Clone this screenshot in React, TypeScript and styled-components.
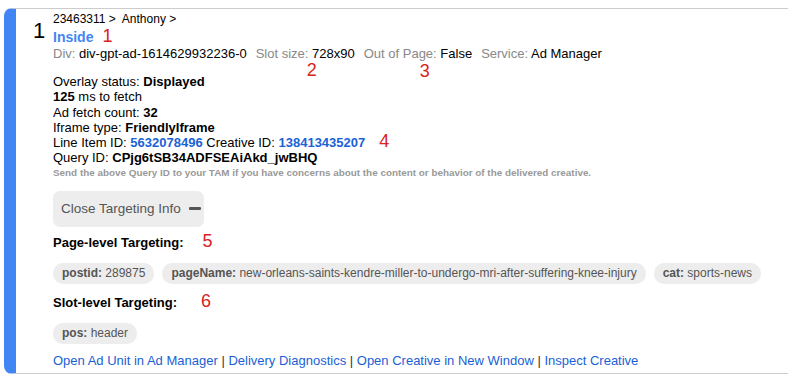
import styled, { createGlobalStyle } from 'styled-components';

const GlobalStyle = createGlobalStyle`
  body {
    margin: 0;
    background: #fff;
    font-family: "Liberation Sans", Arial, sans-serif;
    color: #000;
  }
`;

const Card = styled.div`
  margin: 8px 0 0 4px;
  display: flex;
  border-top: 1px solid #ccc;
  border-bottom: 1px solid #ccc;
  border-left: 12px solid #4285f4;
  border-radius: 8px 0 0 8px;
  height: 366px;
  box-sizing: border-box;
  padding: 4px 0 0 17px;
`;

const Index = styled.div`
  font-size: 22px;
  line-height: 24px;
  padding-top: 6px;
  width: 20px;
`;

const Body = styled.div`
  display: flex;
  flex-direction: column;
  font-size: 13px;
  line-height: 15.3px;
`;

const Crumbs = styled.div`
  font-size: 12px;
  line-height: 13px;
`;

const SlotName = styled.div`
  font-size: 14px;
  font-weight: bold;
  color: #4285f4;
  line-height: 18px;
  margin-top: 2px;
`;

const MetaRow = styled.div`
  display: flex;
  gap: 9px;
  line-height: 15.5px;
  margin-bottom: 12.5px;
`;

const Meta = styled.span`
  position: relative;
`;

const Label = styled.span`
  color: #888;
`;

const Mark = styled.span<{ $top?: number; $left?: number }>`
  color: #d9231c;
  font-size: 18px;
  font-weight: normal;
  line-height: 0;
  position: ${({ $top }) => ($top !== undefined ? 'absolute' : 'static')};
  top: ${({ $top }) => ($top ?? 0) + 8}px;
  left: ${({ $left }) => $left ?? 0}px;
  margin-left: ${({ $top }) => ($top !== undefined ? 0 : 9)}px;
`;

const Blue = styled.b`
  color: #1a62d6;
`;

const Note = styled.div`
  font-size: 9.9px;
  font-weight: bold;
  color: #999;
  line-height: 14px;
`;

const ToggleButton = styled.button`
  margin-top: 11px;
  width: 151px;
  height: 36px;
  border: none;
  border-radius: 7px;
  background: #ededed;
  color: #555;
  font-family: inherit;
  font-size: 13.5px;
  white-space: nowrap;
  display: flex;
  align-items: center;
  justify-content: flex-start;
  gap: 8px;
  padding: 0 8px;
`;

const Minus = styled.span`
  flex-shrink: 0;
  width: 12px;
  height: 3px;
  background: #555;
  border-radius: 1px;
`;

const Heading = styled.div<{ $gap: number }>`
  font-size: 13px;
  font-weight: bold;
  margin-top: ${({ $gap }) => $gap}px;
  line-height: 16px;
`;

const Chips = styled.div`
  display: flex;
  gap: 8px;
  margin-top: 12px;
`;

const Chip = styled.span`
  background: #ededed;
  border-radius: 10px;
  height: 21px;
  line-height: 21px;
  padding: 0 9px;
  font-size: 12px;
  color: #555;
  white-space: nowrap;
`;

const Links = styled.div`
  margin-top: 9px;
  font-size: 13px;
  color: #333;
  a {
    color: #1a5fd6;
    text-decoration: none;
  }
`;

export default function App() {
  return (
    <>
      <GlobalStyle />
      <Card>
        <Index>1</Index>
        <Body>
          <Crumbs>23463311 &gt;&nbsp; Anthony &gt;</Crumbs>
          <SlotName>
            Inside<Mark>1</Mark>
          </SlotName>
          <MetaRow>
            <Meta>
              <Label>Div:</Label> div-gpt-ad-1614629932236-0
            </Meta>
            <Meta>
              <Label>Slot size:</Label> 728x90
              <Mark $top={16} $left={51}>2</Mark>
            </Meta>
            <Meta>
              <Label>Out of Page:</Label> False
              <Mark $top={17} $left={56}>3</Mark>
            </Meta>
            <Meta>
              <Label>Service:</Label> Ad Manager
            </Meta>
          </MetaRow>
          <div>
            Overlay status: <b>Displayed</b>
          </div>
          <div>
            <b>125</b> ms to fetch
          </div>
          <div>
            Ad fetch count: <b>32</b>
          </div>
          <div>
            Iframe type: <b>FriendlyIframe</b>
          </div>
          <div>
            Line Item ID: <Blue>5632078496</Blue> Creative ID: <Blue>138413435207</Blue>
            <Mark>&nbsp;4</Mark>
          </div>
          <div>
            Query ID: <b>CPjg6tSB34ADFSEAiAkd_jwBHQ</b>
          </div>
          <Note>
            Send the above Query ID to your TAM if you have concerns about the content or behavior of the delivered creative.
          </Note>
          <ToggleButton>
            Close Targeting Info <Minus />
          </ToggleButton>
          <Heading $gap={8}>
            Page-level Targeting:<Mark>&nbsp;&nbsp;5</Mark>
          </Heading>
          <Chips>
            <Chip>
              <b>postid:</b> 289875
            </Chip>
            <Chip>
              <b>pageName:</b> new-orleans-saints-kendre-miller-to-undergo-mri-after-suffering-knee-injury
            </Chip>
            <Chip>
              <b>cat:</b> sports-news
            </Chip>
          </Chips>
          <Heading $gap={11}>
            Slot-level Targeting:<Mark>&nbsp;&nbsp;&nbsp;6</Mark>
          </Heading>
          <Chips>
            <Chip>
              <b>pos:</b> header
            </Chip>
          </Chips>
          <Links>
            <a href="#">Open Ad Unit in Ad Manager</a> | <a href="#">Delivery Diagnostics</a> |{' '}
            <a href="#">Open Creative in New Window</a> | <a href="#">Inspect Creative</a>
          </Links>
        </Body>
      </Card>
    </>
  );
}
